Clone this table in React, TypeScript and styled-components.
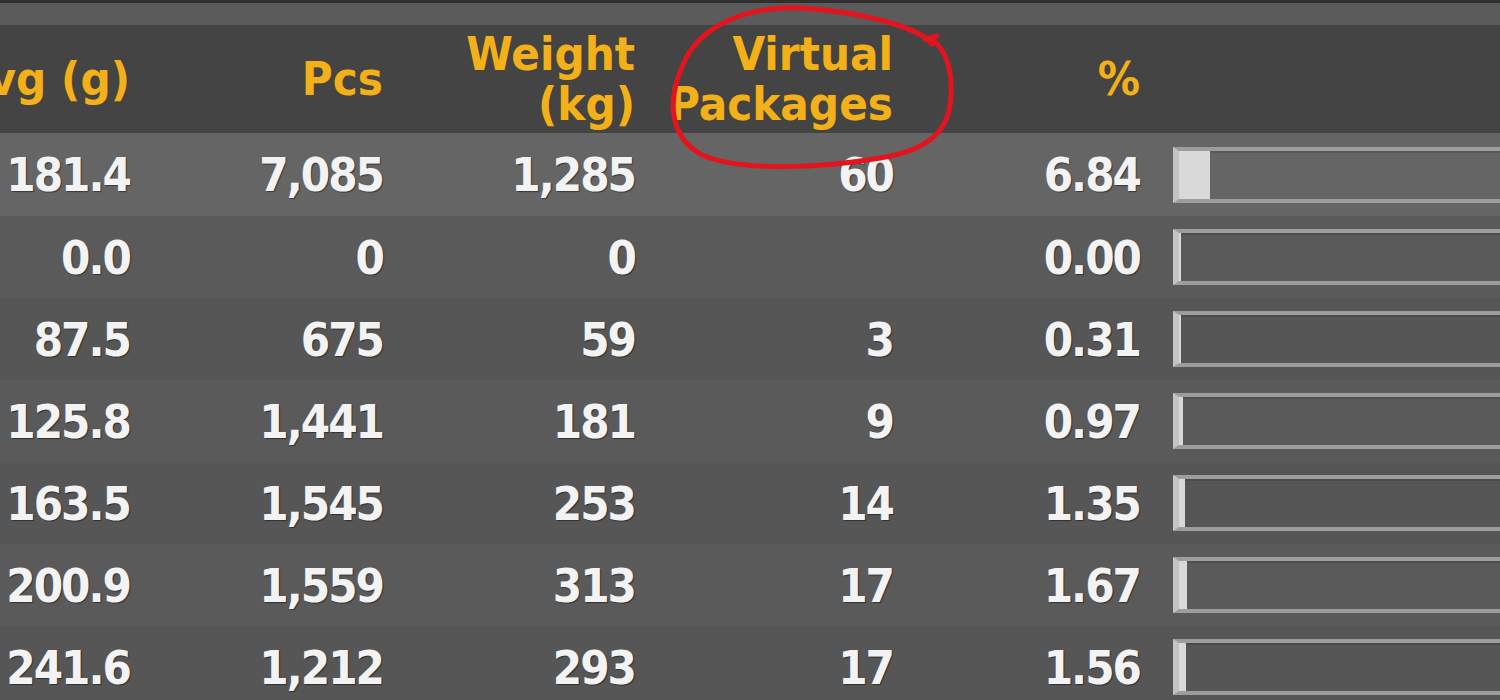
import React from "react";
import styled, { createGlobalStyle } from "styled-components";

const GlobalStyle = createGlobalStyle`
  html, body {
    margin: 0;
    padding: 0;
    background: #585858;
    overflow: hidden;
  }
  body {
    font-family: "DejaVu Sans Condensed", "DejaVu Sans", Verdana, sans-serif;
  }
`;

const COLS = "130px 253px 252px 258px 247px 1fr";

const Page = styled.div`
  position: relative;
  width: 1500px;
  height: 700px;
  overflow: hidden;
  background: #585858;
`;

const TopEdge = styled.div`
  height: 3px;
  background: #2f2f2f;
`;

const Strip = styled.div`
  height: 22px;
  background: #5b5b5b;
`;

const Row = styled.div<{ $bg: string; $h: number }>`
  display: grid;
  grid-template-columns: ${COLS};
  height: ${(p) => p.$h}px;
  background: ${(p) => p.$bg};
  font-family: "DejaVu Sans Condensed", "DejaVu Sans", Verdana, sans-serif;
  font-stretch: condensed;
  font-weight: 700;
  font-size: 47px;
`;

const HeadCell = styled.div`
  display: flex;
  justify-content: flex-end;
  align-items: center;
  text-align: right;
  white-space: nowrap;
  color: #f2b01a;
  line-height: 50px;
  text-shadow: 0 0 1px rgba(120, 80, 0, 0.6);
`;

const Cell = styled.div`
  display: flex;
  justify-content: flex-end;
  align-items: center;
  white-space: nowrap;
  color: #f3f3f3;
  letter-spacing: -2px;
  text-shadow: 1px 1px 1px rgba(0, 0, 0, 0.45);
`;

const BarCell = styled.div`
  display: flex;
  align-items: center;
  padding-left: 33px;
`;

const Bar = styled.div`
  flex: none;
  box-sizing: border-box;
  width: 470px;
  height: 56px;
  border: 4px solid #9d9d9d;
  border-left: 6px solid #c4c4c4;
  box-shadow: inset 0 2px 0 rgba(0, 0, 0, 0.12);
  display: flex;
`;

const Fill = styled.div`
  height: 100%;
  background: #d9d9d9;
  min-width: 2px;
`;

const Annotation = styled.svg`
  position: absolute;
  left: 0;
  top: 0;
  pointer-events: none;
`;

type Data = {
  avg: string;
  pcs: string;
  weight: string;
  vp: string;
  pct: string;
};

const rows: Data[] = [
  { avg: "181.4", pcs: "7,085", weight: "1,285", vp: "60", pct: "6.84" },
  { avg: "0.0", pcs: "0", weight: "0", vp: "", pct: "0.00" },
  { avg: "87.5", pcs: "675", weight: "59", vp: "3", pct: "0.31" },
  { avg: "125.8", pcs: "1,441", weight: "181", vp: "9", pct: "0.97" },
  { avg: "163.5", pcs: "1,545", weight: "253", vp: "14", pct: "1.35" },
  { avg: "200.9", pcs: "1,559", weight: "313", vp: "17", pct: "1.67" },
  { avg: "241.6", pcs: "1,212", weight: "293", vp: "17", pct: "1.56" },
];

const rowBg = (i: number) =>
  i === 0 ? "#656565" : i % 2 === 1 ? "#5a5a5a" : "#565656";

export default function App() {
  return (
    <>
      <GlobalStyle />
      <Page>
        <TopEdge />
        <Strip />
        <Row $bg="#444444" $h={108}>
          <HeadCell>Avg (g)</HeadCell>
          <HeadCell>Pcs</HeadCell>
          <HeadCell>
            Weight
            <br />
            (kg)
          </HeadCell>
          <HeadCell>
            Virtual
            <br />
            Packages
          </HeadCell>
          <HeadCell>%</HeadCell>
          <div />
        </Row>
        {rows.map((r, i) => (
          <Row key={i} $bg={rowBg(i)} $h={i === 0 ? 83 : 82}>
            <Cell>{r.avg}</Cell>
            <Cell>{r.pcs}</Cell>
            <Cell>{r.weight}</Cell>
            <Cell>{r.vp}</Cell>
            <Cell>{r.pct}</Cell>
            <BarCell>
              <Bar>
                <Fill style={{ width: `${parseFloat(r.pct)}%` }} />
              </Bar>
            </BarCell>
          </Row>
        ))}
        <Annotation width="1500" height="700" viewBox="0 0 1500 700">
          <path
            d="M 932 44 C 922 30, 870 12, 800 8 C 742 6, 702 28, 686 58 C 666 98, 668 136, 702 155 C 742 172, 822 168, 880 158 C 930 150, 950 130, 951 95 C 952 70, 946 52, 935 42 L 925 39 L 937 36"
            fill="none"
            stroke="#e3141e"
            strokeWidth="5"
            strokeLinecap="round"
            strokeLinejoin="round"
          />
        </Annotation>
      </Page>
    </>
  );
}
